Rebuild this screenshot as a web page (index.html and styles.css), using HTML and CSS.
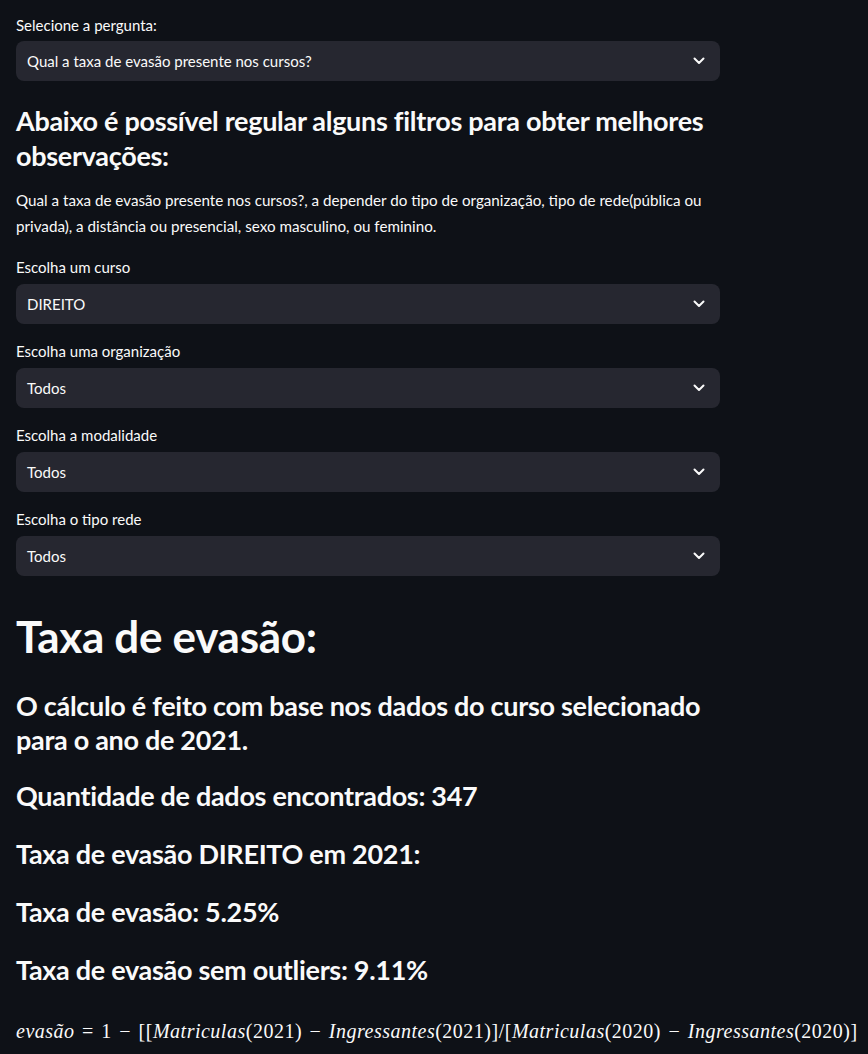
FILE: index.html
```html
<!DOCTYPE html>
<html lang="pt">
<head>
<meta charset="utf-8">
<link rel="stylesheet" href="styles.css">
</head>
<body>
<main class="main">
  <div class="widget first">
    <label class="label">Selecione a pergunta:</label>
    <div class="select"><span class="value">Qual a taxa de evasão presente nos cursos?</span><svg class="chev" width="12" height="8" viewBox="0 0 12 8"><path d="M1.5 1.5 L6 6 L10.5 1.5" fill="none" stroke="#fafafa" stroke-width="2" stroke-linecap="round" stroke-linejoin="round"/></svg></div>
  </div>

  <h3 class="h3 sub">Abaixo é possível regular alguns filtros para obter melhores observações:</h3>
  <p class="para">Qual a taxa de evasão presente nos cursos?, a depender do tipo de organização, tipo de rede(pública ou privada), a distância ou presencial, sexo masculino, ou feminino.</p>

  <div class="widget">
    <label class="label">Escolha um curso</label>
    <div class="select"><span class="value">DIREITO</span><svg class="chev" width="12" height="8" viewBox="0 0 12 8"><path d="M1.5 1.5 L6 6 L10.5 1.5" fill="none" stroke="#fafafa" stroke-width="2" stroke-linecap="round" stroke-linejoin="round"/></svg></div>
  </div>
  <div class="widget">
    <label class="label">Escolha uma organização</label>
    <div class="select"><span class="value">Todos</span><svg class="chev" width="12" height="8" viewBox="0 0 12 8"><path d="M1.5 1.5 L6 6 L10.5 1.5" fill="none" stroke="#fafafa" stroke-width="2" stroke-linecap="round" stroke-linejoin="round"/></svg></div>
  </div>
  <div class="widget">
    <label class="label">Escolha a modalidade</label>
    <div class="select"><span class="value">Todos</span><svg class="chev" width="12" height="8" viewBox="0 0 12 8"><path d="M1.5 1.5 L6 6 L10.5 1.5" fill="none" stroke="#fafafa" stroke-width="2" stroke-linecap="round" stroke-linejoin="round"/></svg></div>
  </div>
  <div class="widget">
    <label class="label">Escolha o tipo rede</label>
    <div class="select"><span class="value">Todos</span><svg class="chev" width="12" height="8" viewBox="0 0 12 8"><path d="M1.5 1.5 L6 6 L10.5 1.5" fill="none" stroke="#fafafa" stroke-width="2" stroke-linecap="round" stroke-linejoin="round"/></svg></div>
  </div>

  <h1 class="h1">Taxa de evasão:</h1>
  <h3 class="h3 res first-res">O cálculo é feito com base nos dados do curso selecionado para o ano de 2021.</h3>
  <h3 class="h3 res q">Quantidade de dados encontrados: 347</h3>
  <h3 class="h3 res">Taxa de evasão DIREITO em 2021:</h3>
  <h3 class="h3 res">Taxa de evasão: 5.25%</h3>
  <h3 class="h3 res">Taxa de evasão sem outliers: 9.11%</h3>

  <p class="math"><i>evasão</i> <span class="op">=</span> 1 <span class="op">−</span> [[<i>Matriculas</i>(2021) <span class="op">−</span> <i>Ingressantes</i>(2021)]/[<i>Matriculas</i>(2020) <span class="op">−</span> <i>Ingressantes</i>(2020)]</p>
</main>
</body>
</html>
```

FILE: styles.css
```css
html, body {
  margin: 0;
  padding: 0;
  background: #0e1117;
  color: #fafafa;
  font-family: Lato, "Open Sans", sans-serif;
}
.main {
  width: 704px;
  padding: 14px 16px 0 16px;
}
.widget {
  margin-top: 16px;
}
.widget.first {
  margin-top: 0;
}
.label {
  display: block;
  font-size: 15px;
  line-height: 22px;
  height: 22px;
  margin-bottom: 6px;
}
.widget.first .label {
  margin-bottom: 5px;
}
.select {
  height: 40px;
  background: #262730;
  border-radius: 8px;
  display: flex;
  align-items: center;
  justify-content: space-between;
  padding: 0 15px 0 11px;
  font-size: 15px;
}
.chev {
  display: block;
}
.h3 {
  font-size: 27px;
  font-weight: 700;
  line-height: 35px;
  margin: 0;
  letter-spacing: -0.3px;
}
.sub {
  margin-top: 22px;
}
.para {
  font-size: 15.2px;
  line-height: 26px;
  margin: 14px 0 0 0;
}
.para + .widget {
  margin-top: 17px;
}
.h1 {
  font-size: 44px;
  font-weight: 700;
  line-height: 53px;
  margin: 34px 0 0 0;
  letter-spacing: -0.3px;
}
.res {
  margin-top: 24px;
  line-height: 34px;
}
.res.q {
  margin-top: 22px;
}
.res.first-res {
  margin-top: 26px;
}
.math {
  margin: 32px 0 0 0;
  font-family: "Liberation Serif", "DejaVu Serif", serif;
  font-size: 20px;
  line-height: 24px;
  letter-spacing: 0.5px;
  white-space: nowrap;
}
.math i {
  font-style: italic;
}
.op {
  padding: 0 2px;
}
```
